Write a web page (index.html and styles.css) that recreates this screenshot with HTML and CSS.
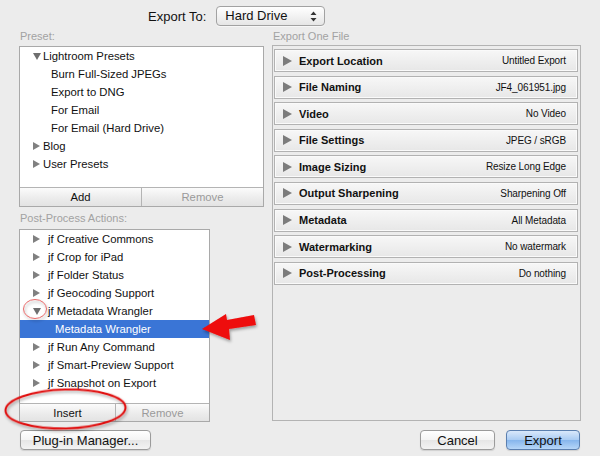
FILE: index.html
```html
<!DOCTYPE html>
<html lang="en">
<head>
<meta charset="UTF-8">
<meta name="viewport" content="width=device-width, initial-scale=1.0">
<title>Export</title>

<link rel="stylesheet" href="styles.css">
</head>
<body>

<div class="dialog">
    <div class="top-bar">
        <span class="export-to">Export To:</span>
        <div class="popup">
            Hard Drive
            <svg class="updown" width="7" height="11" viewBox="0 0 7 11"><path d="M3.5 0.5 L6.5 4 L0.5 4 Z M0.5 7 L6.5 7 L3.5 10.5 Z" fill="#333"/></svg>
        </div>
    </div>

    <div class="main">
        <div class="left">
            <div class="section-label">Preset:</div>
            <div class="list-box preset-box">
                <ul class="tree">
                    <li class="node"><span class="tog open"></span>Lightroom Presets</li>
                    <li class="child">Burn Full-Sized JPEGs</li>
                    <li class="child">Export to DNG</li>
                    <li class="child">For Email</li>
                    <li class="child">For Email (Hard Drive)</li>
                    <li class="node"><span class="tog"></span>Blog</li>
                    <li class="node"><span class="tog"></span>User Presets</li>
                </ul>
                <div class="btn-bar">
                    <button class="bar-btn add">Add</button>
                    <button class="bar-btn off">Remove</button>
                </div>
            </div>

            <div class="section-label second">Post-Process Actions:</div>
            <div class="list-box post-box">
                <ul class="tree post">
                    <li class="node"><span class="tog"></span>jf Creative Commons</li>
                    <li class="node"><span class="tog"></span>jf Crop for iPad</li>
                    <li class="node"><span class="tog"></span>jf Folder Status</li>
                    <li class="node"><span class="tog"></span>jf Geocoding Support</li>
                    <li class="node"><span class="tog open"></span>jf Metadata Wrangler</li>
                    <li class="child selected">Metadata Wrangler</li>
                    <li class="node"><span class="tog"></span>jf Run Any Command</li>
                    <li class="node"><span class="tog"></span>jf Smart-Preview Support</li>
                    <li class="node"><span class="tog"></span>jf Snapshot on Export</li>
                </ul>
                <div class="btn-bar">
                    <button class="bar-btn insert">Insert</button>
                    <button class="bar-btn off">Remove</button>
                </div>
            </div>
        </div>

        <div class="right">
            <div class="section-label">Export One File</div>
            <div class="panel">
                <div class="row"><span class="arrow"></span><span class="title">Export Location</span><span class="value">Untitled Export</span></div>
                <div class="row"><span class="arrow"></span><span class="title">File Naming</span><span class="value">JF4_061951.jpg</span></div>
                <div class="row"><span class="arrow"></span><span class="title">Video</span><span class="value">No Video</span></div>
                <div class="row"><span class="arrow"></span><span class="title">File Settings</span><span class="value">JPEG / sRGB</span></div>
                <div class="row"><span class="arrow"></span><span class="title">Image Sizing</span><span class="value">Resize Long Edge</span></div>
                <div class="row"><span class="arrow"></span><span class="title">Output Sharpening</span><span class="value">Sharpening Off</span></div>
                <div class="row"><span class="arrow"></span><span class="title">Metadata</span><span class="value">All Metadata</span></div>
                <div class="row"><span class="arrow"></span><span class="title">Watermarking</span><span class="value">No watermark</span></div>
                <div class="row"><span class="arrow"></span><span class="title">Post-Processing</span><span class="value">Do nothing</span></div>
            </div>
        </div>
    </div>

    <div class="footer">
        <button class="push plugin">Plug-in Manager...</button>
        <div class="spacer"></div>
        <button class="push cancel">Cancel</button>
        <button class="push export">Export</button>
    </div>

    <!-- red markup drawn on top of the screenshot -->
    <svg class="marks" width="600" height="456" viewBox="0 0 600 456">
        <defs>
            <filter id="shadow" x="-20%" y="-40%" width="140%" height="180%">
                <feDropShadow dx="1" dy="2" stdDeviation="1.5" flood-color="#000" flood-opacity="0.35"/>
            </filter>
        </defs>
        <ellipse cx="35" cy="309" rx="11.5" ry="9.5" fill="none" stroke="#e86a6a" stroke-width="1" filter="url(#shadow)"/>
        <ellipse cx="65.5" cy="409" rx="60" ry="19.5" fill="none" stroke="#e01010" stroke-width="2" transform="rotate(-1.5 65.5 409)" filter="url(#shadow)"/>
        <polygon points="202,329 226,314 227,320 254,315 256,325 229,329 230,340" fill="#ee0a0a" filter="url(#shadow)"/>
    </svg>
</div>

</body>
</html>
```

FILE: styles.css
```css
body {
    margin: 0;
    background-color: #ececec;
    font-family: "Liberation Sans", Arial, sans-serif;
    font-size: 11px;
    color: #111;
}

.dialog {
    position: relative;
    width: 600px;
    height: 456px;
}

/* top popup */
.top-bar {
    display: flex;
    align-items: center;
    height: 29px;
    padding-left: 148px;
    box-sizing: border-box;
    padding-top: 3px;
}

.export-to {
    font-size: 13px;
    margin-right: 10px;
}

.popup {
    position: relative;
    width: 109px;
    height: 20px;
    box-sizing: border-box;
    padding-left: 8px;
    font-size: 13px;
    line-height: 18px;
    border: 1px solid #a2a2a2;
    border-radius: 4px;
    background: linear-gradient(#ffffff, #f2f2f2 50%, #e6e6e6);
    box-shadow: 0 1px 0 rgba(255, 255, 255, 0.6);
}

.updown {
    position: absolute;
    right: 7px;
    top: 4px;
}

/* columns */
.main {
    display: flex;
    align-items: flex-start;
    padding-left: 19px;
}

.left {
    width: 245px;
    margin-right: 8px;
}

.right {
    width: 309px;
}

.section-label {
    height: 14px;
    line-height: 14px;
    color: #a2a2a2;
    padding-left: 1px;
    margin-bottom: 3px;
}

.section-label.second {
    margin-top: 4px;
    margin-bottom: 4px;
}

.list-box {
    border: 1px solid #a9a9a9;
    background-color: #fff;
    display: flex;
    flex-direction: column;
    box-sizing: border-box;
}

.preset-box {
    height: 161px;
}

.post-box {
    width: 191px;
    height: 193px;
}

.tree {
    list-style-type: none;
    margin: 0;
    padding: 0;
    flex: 1;
    font-size: 11.3px;
}

.tree li {
    height: 18px;
    line-height: 18px;
    display: flex;
    align-items: center;
    white-space: nowrap;
}

.tree .node {
    padding-left: 13px;
}

.tree .child {
    padding-left: 31px;
}

.tree.post .child {
    padding-left: 35px;
}

.tog {
    width: 10px;
    flex: none;
    display: flex;
    align-items: center;
}

.tree.post .tog {
    width: 15px;
}

.tog::before {
    content: "";
    border-left: 7px solid #808080;
    border-top: 4px solid transparent;
    border-bottom: 4px solid transparent;
}

.tog.open::before {
    border-left: 4px solid transparent;
    border-right: 4px solid transparent;
    border-top: 7px solid #6e6e6e;
    border-bottom: none;
    margin-top: 1px;
}

.tree .selected {
    background-color: #3a75d6;
    color: #fff;
}

.btn-bar {
    display: flex;
    height: 19px;
    border-top: 1px solid #b4b4b4;
    box-sizing: border-box;
}

.post-box .btn-bar {
    height: 18px;
}

.bar-btn {
    flex: 1;
    margin: 0;
    padding: 0;
    border: none;
    font-family: inherit;
    font-size: 11.3px;
    color: #111;
    background: linear-gradient(#fbfbfb, #ececec 55%, #e3e3e3);
}

.bar-btn + .bar-btn {
    border-left: 1px solid #b4b4b4;
}

.bar-btn.off {
    color: #9a9a9a;
}

.post-box .insert {
    flex: none;
    width: 95px;
}

/* export sections */
.panel {
    height: 376px;
    margin-top: -1px;
    border: 1px solid #b3b3b3;
    box-sizing: border-box;
    padding: 3px 2px 0 1px;
}

.row {
    display: flex;
    align-items: center;
    height: 23px;
    margin-bottom: 3.6px;
    box-sizing: border-box;
    border: 1px solid #b2b2b2;
    box-shadow: inset 0 0 0 1px #fafafa;
    background: linear-gradient(#f7f7f7, #efefef 50%, #e7e7e7);
    padding: 0 11px 0 8px;
}

.arrow {
    width: 0;
    height: 0;
    border-left: 9px solid #7c7c7c;
    border-top: 5px solid transparent;
    border-bottom: 5px solid transparent;
    margin-right: 7px;
}

.title {
    font-weight: bold;
    font-size: 11px;
    flex: 1;
}

.value {
    font-size: 10px;
    letter-spacing: -0.1px;
}

/* bottom buttons */
.footer {
    display: flex;
    padding: 0 20px 0 20px;
    margin-top: 8px;
}

.spacer {
    flex: 1;
}

.push {
    height: 20px;
    padding: 0;
    font-family: inherit;
    font-size: 13px;
    color: #111;
    border: 1px solid #9b9b9b;
    border-radius: 4px;
    background: linear-gradient(#ffffff, #f4f4f4 50%, #e6e6e6 51%, #f3f3f3);
    box-shadow: 0 1px 1px rgba(0, 0, 0, 0.12);
}

.plugin {
    width: 131px;
}

.cancel {
    width: 75px;
    margin-right: 11px;
}

.export {
    width: 74px;
    border-color: #5b7faf;
    background: linear-gradient(#d9e8fb, #a9cbf3 50%, #86b5ec 51%, #b6d6f8);
}

.marks {
    position: absolute;
    left: 0;
    top: 0;
    pointer-events: none;
}
```
